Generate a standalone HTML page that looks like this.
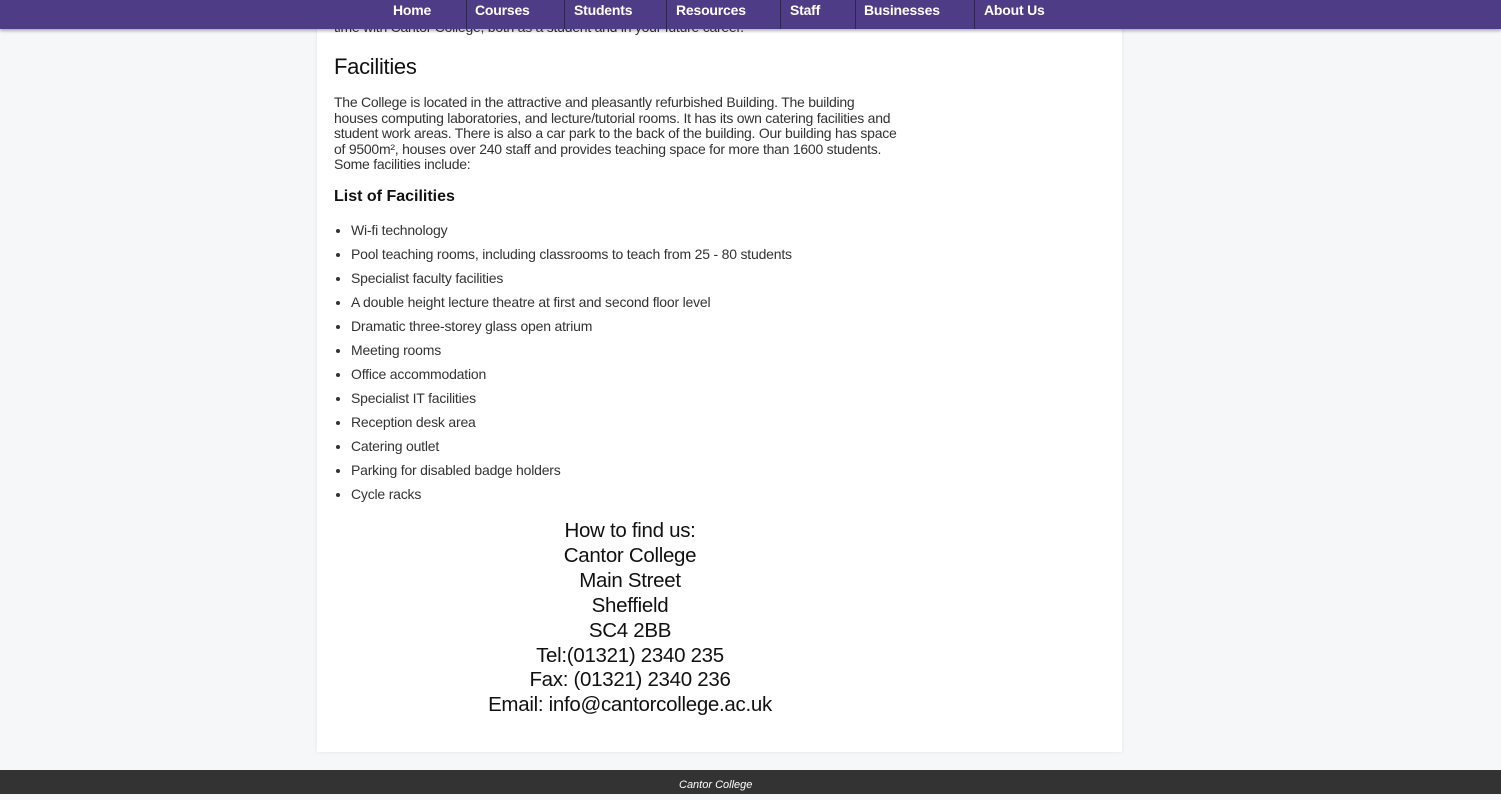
<!DOCTYPE html>
<html><head><meta charset="utf-8"><style>
body{margin:0;width:1501px;height:794px;overflow:hidden;background:#f6f7f9;font-family:"Liberation Sans",sans-serif;position:relative}
.card{position:absolute;left:317px;top:0;width:805px;height:752px;background:#fff;box-shadow:0 0 4px rgba(0,0,0,.08)}
nav{position:absolute;left:0;top:0;width:1501px;height:29px;background:#4e3c86;box-shadow:0 2px 3px rgba(0,0,0,.3);z-index:5}
nav span{position:absolute;top:2px;color:#fff;font-weight:bold;font-size:14px;letter-spacing:-0.2px}
nav i{position:absolute;top:0;width:1px;height:29px;background:#2e2450}
.c{position:absolute;left:334px;color:#333;font-size:14px;line-height:15.5px;letter-spacing:-0.25px}
h2{position:absolute;left:334px;top:54px;margin:0;font-size:22px;font-weight:normal;color:#111;letter-spacing:-0.3px}
h3{position:absolute;left:334px;top:188px;margin:0;font-size:16px;color:#111}
ul{position:absolute;left:334px;top:222px;margin:0;padding-left:17px;font-size:14px;color:#333;letter-spacing:-0.2px}
li{height:24px;line-height:16px}
.addr{position:absolute;left:330px;width:600px;top:519px;text-align:center;font-size:20.5px;line-height:24.9px;color:#111;letter-spacing:-0.3px}
footer{position:absolute;left:0;top:770px;width:1501px;height:24px;background:#333;color:#fff;font-style:italic;font-size:11px;line-height:30px}
footer span{position:absolute;left:679px;top:0}
</style></head><body>
<div class="card"></div>
<div class="c" style="top:20px">time with Cantor College, both as a student and in your future career.</div>
<nav>
<span style="left:393px">Home</span><i style="left:466px"></i>
<span style="left:475px">Courses</span><i style="left:564px"></i>
<span style="left:574px">Students</span><i style="left:666px"></i>
<span style="left:676px">Resources</span><i style="left:780px"></i>
<span style="left:790px">Staff</span><i style="left:855px"></i>
<span style="left:864px">Businesses</span><i style="left:974px"></i>
<span style="left:984px">About Us</span>
</nav>
<h2>Facilities</h2>
<div class="c" style="top:95px;width:580px">The College is located in the attractive and pleasantly refurbished Building. The building<br>houses computing laboratories, and lecture/tutorial rooms. It has its own catering facilities and<br>student work areas. There is also a car park to the back of the building. Our building has space<br>of 9500m², houses over 240 staff and provides teaching space for more than 1600 students.<br>Some facilities include:</div>
<h3>List of Facilities</h3>
<ul>
<li>Wi-fi technology</li>
<li>Pool teaching rooms, including classrooms to teach from 25 - 80 students</li>
<li>Specialist faculty facilities</li>
<li>A double height lecture theatre at first and second floor level</li>
<li>Dramatic three-storey glass open atrium</li>
<li>Meeting rooms</li>
<li>Office accommodation</li>
<li>Specialist IT facilities</li>
<li>Reception desk area</li>
<li>Catering outlet</li>
<li>Parking for disabled badge holders</li>
<li>Cycle racks</li>
</ul>
<div class="addr">How to find us:<br>Cantor College<br>Main Street<br>Sheffield<br>SC4 2BB<br>Tel:(01321) 2340 235<br>Fax: (01321) 2340 236<br>Email: info@cantorcollege.ac.uk</div>
<footer><span>Cantor College</span></footer>
</body></html>
